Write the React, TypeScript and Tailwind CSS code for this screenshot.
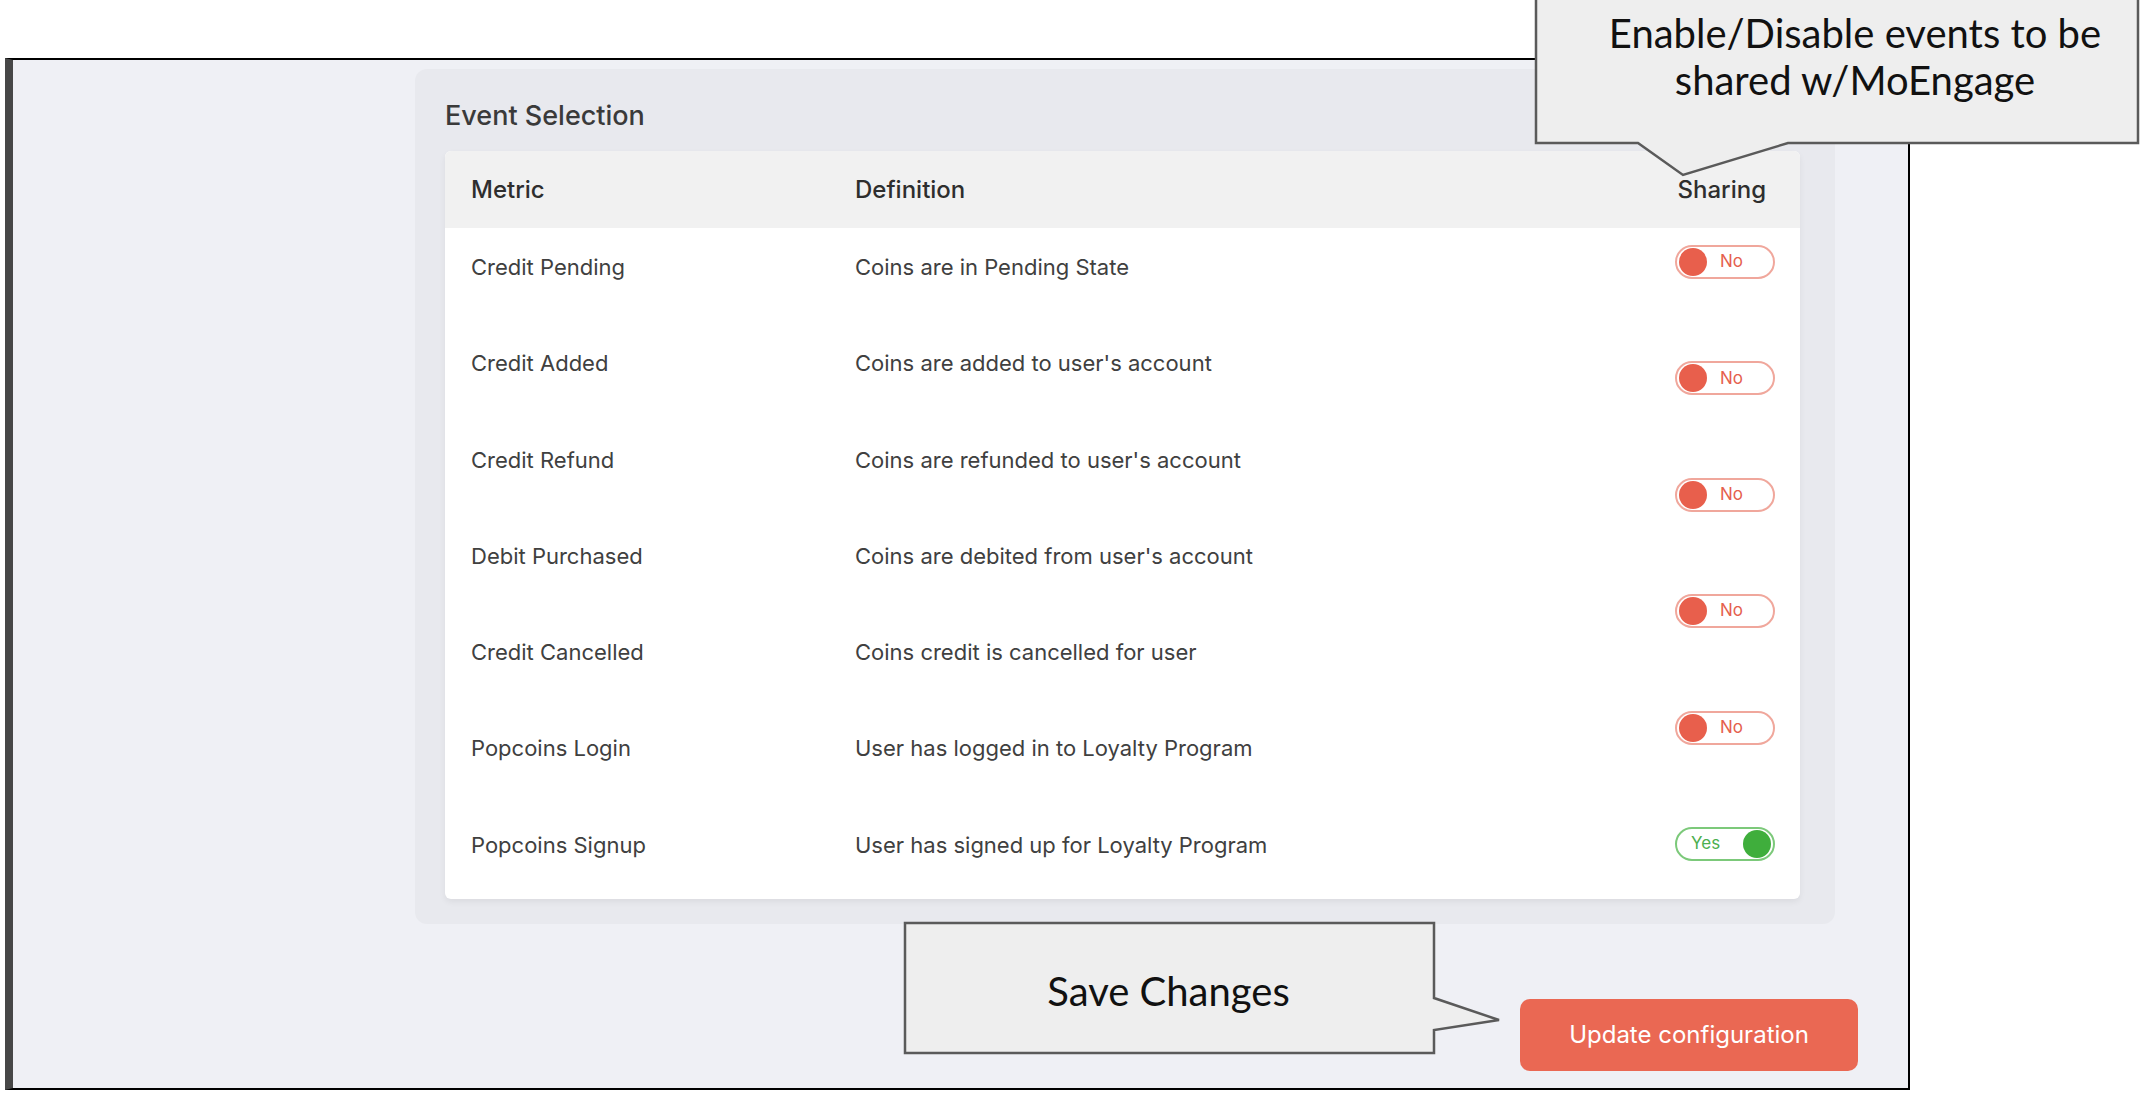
import React from 'react'

const rows = [
  { metric: 'Credit Pending', definition: 'Coins are in Pending State' },
  { metric: 'Credit Added', definition: "Coins are added to user's account" },
  { metric: 'Credit Refund', definition: "Coins are refunded to user's account" },
  { metric: 'Debit Purchased', definition: "Coins are debited from user's account" },
  { metric: 'Credit Cancelled', definition: 'Coins credit is cancelled for user' },
  { metric: 'Popcoins Login', definition: 'User has logged in to Loyalty Program' },
  { metric: 'Popcoins Signup', definition: 'User has signed up for Loyalty Program' },
]

const sharing = [false, false, false, false, false, true]

function Toggle({ on }: { on: boolean }) {
  if (on) {
    return (
      <div className="flex h-[34px] w-[100px] items-center justify-between rounded-full border-2 border-[#7cc97a] bg-white pl-[14px] pr-[2px]">
        <span className="text-[17px] text-[#4caf50]">Yes</span>
        <span className="h-[28px] w-[28px] rounded-full bg-[#3fae3c]" />
      </div>
    )
  }
  return (
    <div className="flex h-[34px] w-[100px] items-center gap-[13px] rounded-full border-2 border-[#f0a79c] bg-white pl-[2px]">
      <span className="h-[28px] w-[28px] rounded-full bg-[#e85f4c]" />
      <span className="text-[17px] text-[#e5604e]">No</span>
    </div>
  )
}

function Callout({
  className,
  width,
  height,
  points,
  children,
}: {
  className: string
  width: number
  height: number
  points: string
  children: React.ReactNode
}) {
  return (
    <div className={`absolute ${className}`}>
      <svg width={width} height={height} className="absolute left-0 top-0">
        <polygon points={points} fill="#eeeeee" stroke="#5a5a5a" strokeWidth="2.5" strokeLinejoin="miter" />
      </svg>
      {children}
    </div>
  )
}

export default function App() {
  return (
    <div
      className="relative h-[1096px] w-[2146px] overflow-hidden bg-white pt-[58px] pl-[5px]"
      style={{ fontFamily: 'Inter, "Noto Sans", sans-serif' }}
    >
      {/* screenshot frame */}
      <div className="flex h-[1032px] w-[1905px] flex-col border-2 border-l-[8px] border-black border-l-[#474747] bg-[#eff0f5]">
        <div className="ml-[402px] mt-[9px] h-[855px] w-[1420px] rounded-[12px] bg-[#e8e9ee] pl-[30px] pr-[35px] pt-[31px]">
          <h2 className="h-[32px] text-[27px] font-medium leading-[32px] text-[#3a3a3a]">Event Selection</h2>

          <div className="mt-[19px] overflow-hidden rounded-[6px] bg-white shadow-[0_3px_6px_rgba(0,0,0,0.06)]">
            <div className="flex h-[77px] items-center bg-[#f1f1f1] pl-[26px] pr-[34px] text-[24px] font-medium text-[#2e2e2e]">
              <div className="w-[384px]">Metric</div>
              <div className="flex-1">Definition</div>
              <div>Sharing</div>
            </div>

            <div className="flex pb-[38px]">
              <div className="flex flex-1 flex-col gap-[68.3px] pl-[26px] pt-[25px] text-[22px] leading-[28px] text-[#404040]">
                {rows.map((r) => (
                  <div key={r.metric} className="flex">
                    <div className="w-[384px]">{r.metric}</div>
                    <div>{r.definition}</div>
                  </div>
                ))}
              </div>
              <div className="flex flex-col gap-[82.4px] pr-[25px] pt-[17px]">
                {sharing.map((on, i) => (
                  <Toggle key={i} on={on} />
                ))}
              </div>
            </div>
          </div>
        </div>

        <div className="ml-[1507px] mt-[75px]">
          <button className="h-[72px] w-[338px] rounded-[10px] bg-[#ea6853] text-[24px] text-white">
            Update configuration
          </button>
        </div>
      </div>

      {/* callout: sharing */}
      <Callout
        className="left-[1534px] top-[-22px] h-[200px] w-[606px]"
        width={606}
        height={200}
        points="2,2 604,2 604,165 254,165 149,197 104,165 2,165"
      >
        <div
          className="absolute left-[18px] top-[32px] w-[606px] text-center text-[40px] leading-[47px] text-[#111]"
          style={{ fontFamily: 'Lato, "Open Sans", sans-serif' }}
        >
          Enable/Disable events to be
          <br />
          shared w/MoEngage
        </div>
      </Callout>

      {/* callout: save */}
      <Callout
        className="left-[903px] top-[921px] h-[134px] w-[600px]"
        width={600}
        height={134}
        points="2,2 531,2 531,77 596,99 531,109 531,132 2,132"
      >
        <div
          className="absolute left-0 top-[46px] w-[531px] text-center text-[40px] leading-[48px] text-[#111]"
          style={{ fontFamily: 'Lato, "Open Sans", sans-serif' }}
        >
          Save Changes
        </div>
      </Callout>
    </div>
  )
}
